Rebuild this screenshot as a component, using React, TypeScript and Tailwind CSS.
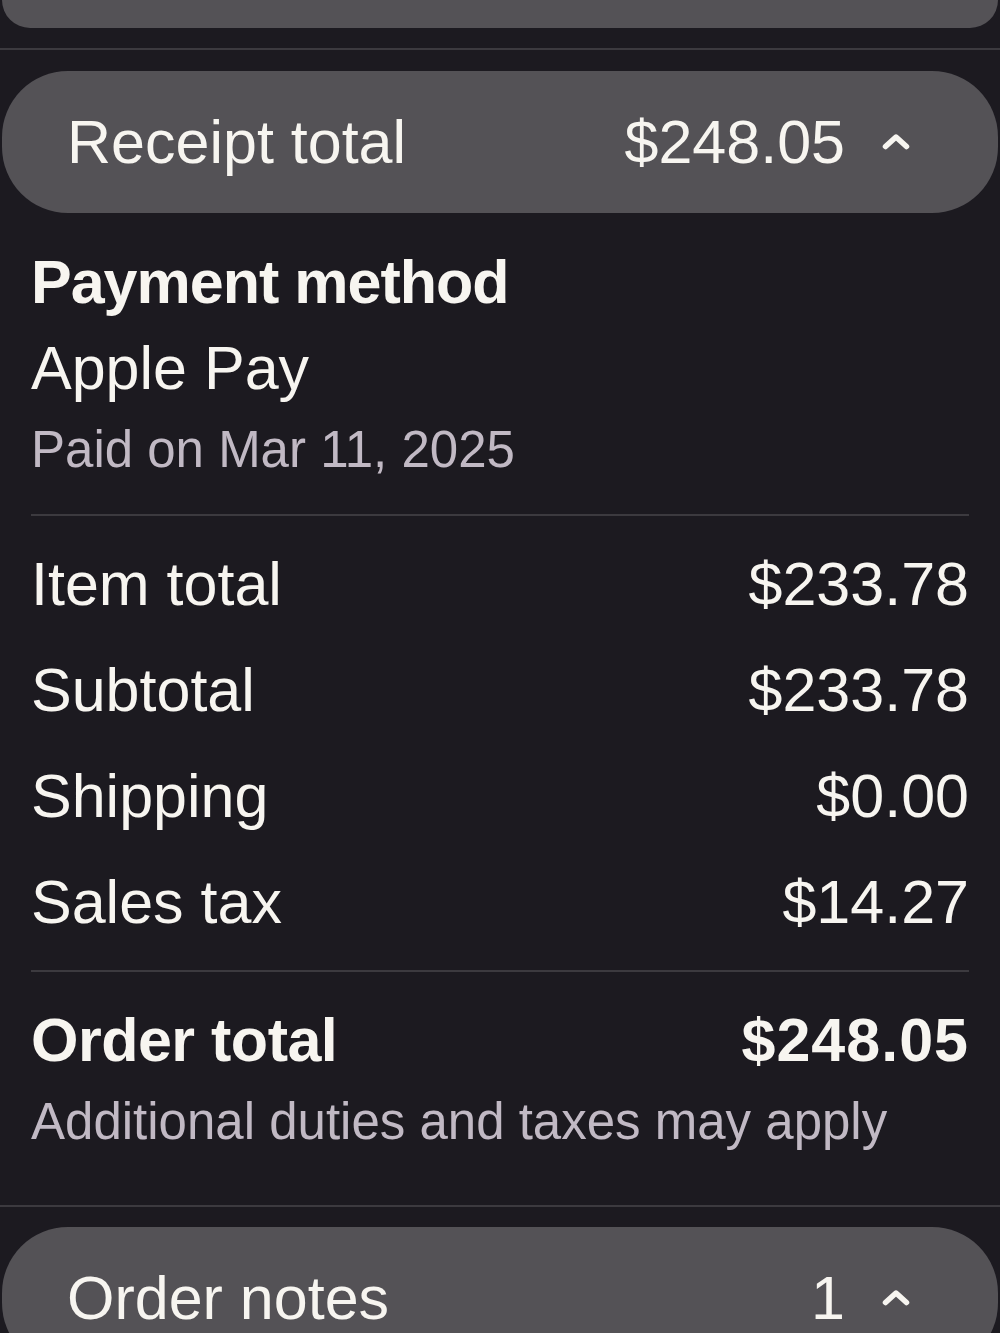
import React from "react";

function Chevron() {
  return (
    <svg width="30" height="20" viewBox="0 0 30 20" fill="none" aria-hidden>
      <path d="M4.5 14.5 L15 5 L25.5 14.5" stroke="#f7f5f0" strokeWidth="5.5" strokeLinecap="round" strokeLinejoin="round" />
    </svg>
  );
}

function Pill({ label, value }: { label: string; value: string }) {
  return (
    <div className="mx-[2px] flex h-[142px] items-center justify-between rounded-[66px] bg-[#545256] pl-[65px] pr-[87px] leading-[80px]">
      <span>{label}</span>
      <span className="flex items-center gap-[36px]">
        <span>{value}</span>
        <Chevron />
      </span>
    </div>
  );
}

function Row({ label, value }: { label: string; value: string }) {
  return (
    <div className="flex h-[106px] items-center justify-between leading-[106px]">
      <span>{label}</span>
      <span>{value}</span>
    </div>
  );
}

export default function App() {
  const rows = [
    ["Item total", "$233.78"],
    ["Subtotal", "$233.78"],
    ["Shipping", "$0.00"],
    ["Sales tax", "$14.27"],
  ];

  return (
    <div className="h-[1333px] overflow-hidden bg-[#1c1a20] font-['Liberation_Sans',Arial,sans-serif] text-[61px] text-[#f7f5f0]">
      <div className="mx-[2px] h-[28px] rounded-b-[60px] bg-[#545256]" />
      <div className="mt-[20px] h-[2px] bg-[#3c3a3f]" />

      <div className="mt-[21px]">
        <Pill label="Receipt total" value="$248.05" />
      </div>

      <div className="px-[31px]">
        <div className="mt-[29px] font-bold leading-[80px] tracking-[-1px]">Payment method</div>
        <div className="mt-[6px] leading-[80px]">Apple Pay</div>
        <div className="whitespace-nowrap text-[51px] leading-[84px] text-[#c1b9c4]">Paid on Mar 11, 2025</div>

        <div className="mt-[22px] h-[2px] bg-[#3c3a3f]" />

        <div className="mt-[15px]">
          {rows.map(([l, v]) => (
            <Row key={l} label={l} value={v} />
          ))}
        </div>

        <div className="mt-[15px] h-[2px] bg-[#3c3a3f]" />

        <div className="mt-[28px] flex justify-between font-bold leading-[80px]">
          <span className="tracking-[-0.5px]">Order total</span>
          <span className="tracking-[1px]">$248.05</span>
        </div>
        <div className="whitespace-nowrap text-[51px] leading-[84px] text-[#c1b9c4]">
          Additional duties and taxes may apply
        </div>
      </div>

      <div className="mt-[41px] h-[2px] bg-[#3c3a3f]" />

      <div className="mt-[20px]">
        <Pill label="Order notes" value="1" />
      </div>
    </div>
  );
}
